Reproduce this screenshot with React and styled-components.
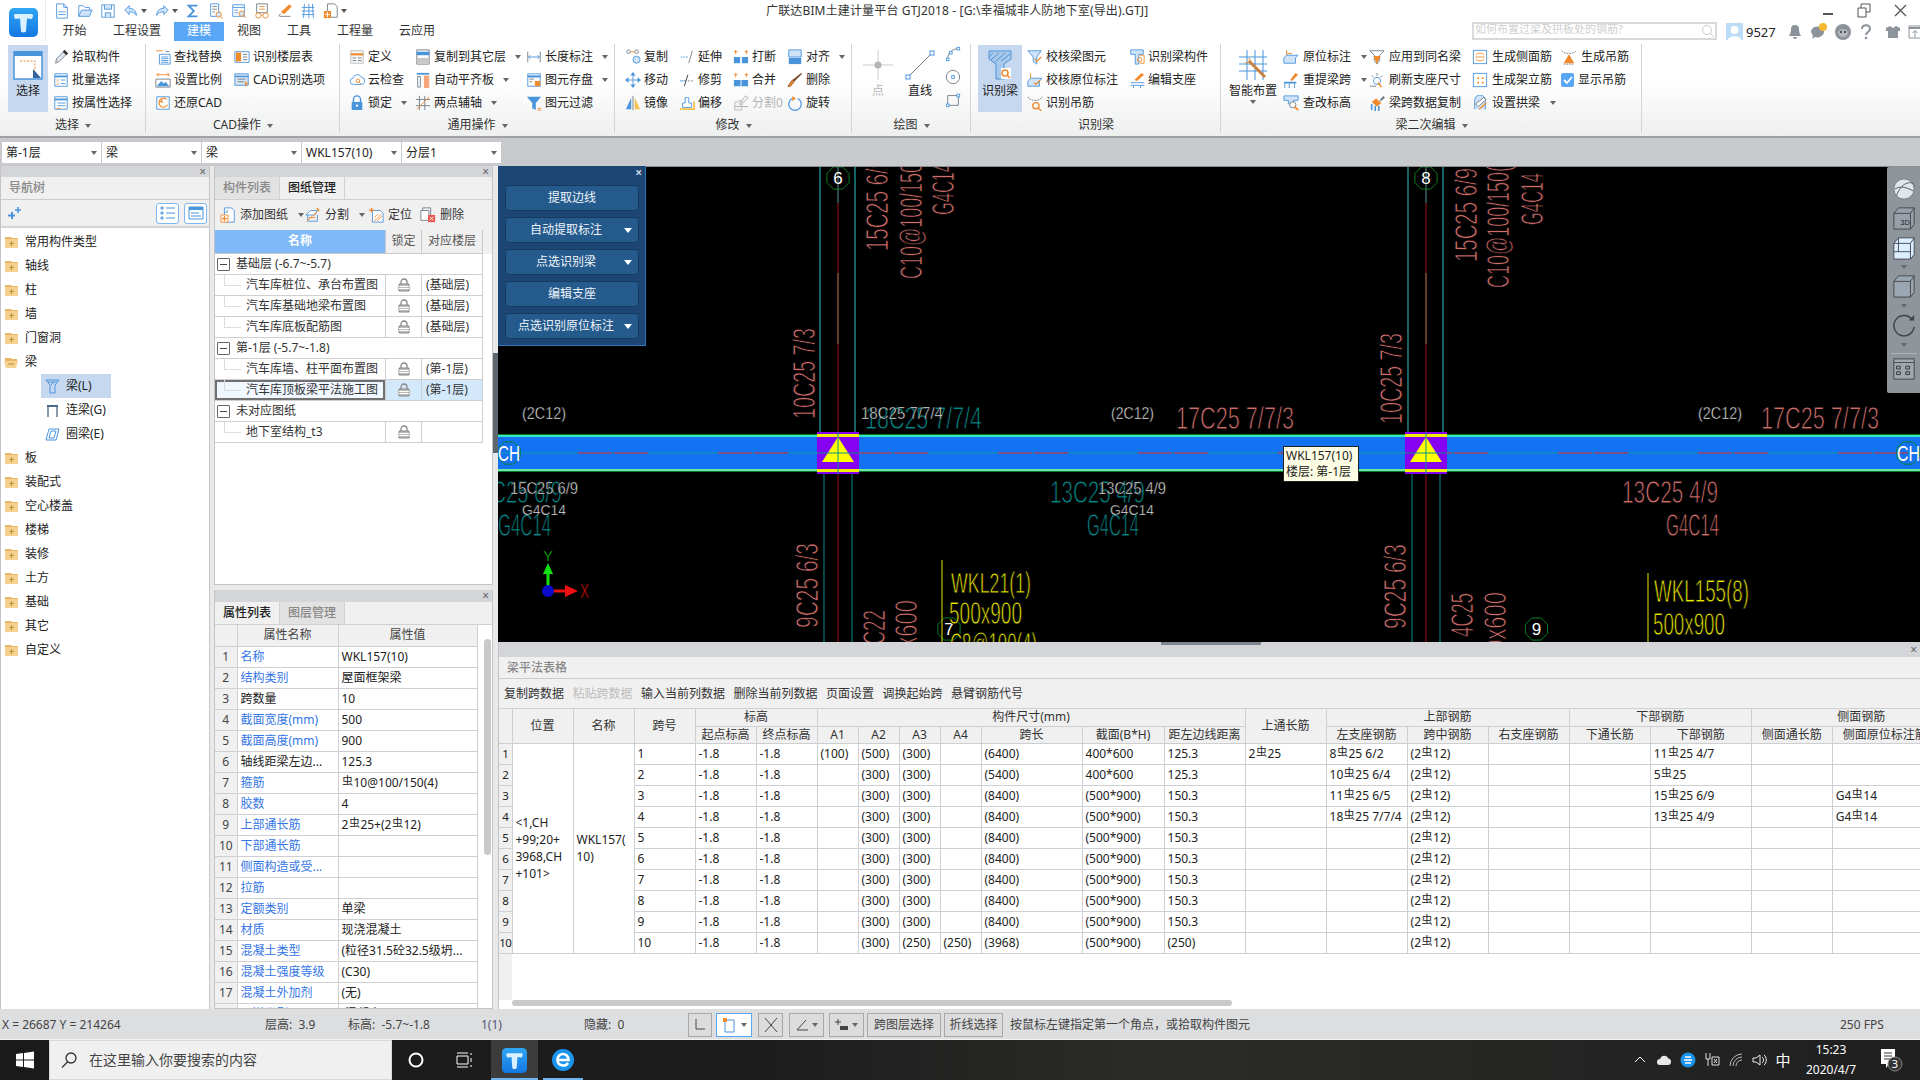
import React from 'react';
import styled, { createGlobalStyle } from 'styled-components';

const FONT = '"Noto Sans", "Noto Sans CJK SC", sans-serif';
const B = '#4a94dc', O = '#f08a2c', K = '#6f7b86', L = '#cfe4f8', Y = '#f6c14f';

const Global = createGlobalStyle`
  html, body { margin: 0; padding: 0; width: 1920px; height: 1080px; overflow: hidden; background: #eee; }
  body { font: 12px/16px ${FONT}; color: #222; }
  * { box-sizing: border-box; }
`;

const Frame = styled.div`display: flex; flex-direction: column; width: 1920px; height: 1080px; overflow: hidden;`;

/* ---------- icons ---------- */
const Svg = styled.svg`width: ${p => p.$s || 16}px; height: ${p => p.$s || 16}px; flex: none; display: block;`;
const icons = {
  file: <><path d="M3 1h8l4 4v12H3z" fill="#fff" stroke={B}/><path d="M11 1v4h4M5 10h8M5 13h8" stroke={B}/></>,
  folder: <><path d="M2 15V3h5l2 2h5v3" stroke={B}/><path d="M2 15l3-7h12l-3 7z" fill={L} stroke={B}/></>,
  save: <><path d="M2 2h14v14H2z" fill="#fff" stroke={B}/><path d="M5 2v5h8V2M6 16v-5h6v5" stroke={B} fill={L}/></>,
  undo: <><path d="M7 3L2 8l5 5V10c4 0 7 1 8 4 0-5-3-8-8-8z" fill={L} stroke={B}/></>,
  redo: <><path d="M11 3l5 5-5 5V10c-4 0-7 1-8 4 0-5 3-8 8-8z" fill={L} stroke={B}/></>,
  sigma: <><path d="M14 3H4l6 6-6 6h10" stroke={B} strokeWidth="2"/></>,
  report: <><path d="M3 1h9v14H3z" fill="#fff" stroke={B}/><path d="M5 4h5M5 7h5M5 10h3" stroke={K}/><circle cx="12" cy="13" r="3" fill={L} stroke={O}/><path d="M14 15l3 3" stroke={O}/></>,
  preview: <><path d="M2 2h13v13H2z" fill="#fff" stroke={B}/><path d="M2 5h13M4 8h4M4 11h4" stroke={B}/><circle cx="12" cy="12" r="3" fill={L} stroke={O}/><path d="M14 14l3 3" stroke={O}/></>,
  glass: <><path d="M3 1h12v10H3z" fill="#fff" stroke={K}/><path d="M6 4h6M6 7h6" stroke={O}/><circle cx="5" cy="14" r="3" stroke={O}/><circle cx="13" cy="14" r="3" stroke={O}/><path d="M8 14h2" stroke={O}/></>,
  pen: <><path d="M14 2l2 2-8 8-3-2z" fill={O} stroke={O}/><path d="M3 15h12M4 12l-2 3" stroke={K}/></>,
  gridq: <><path d="M2 5h14M2 9h14M2 13h14M5 1l-1 16M10 1v16M14 1l1 16" stroke={B}/></>,
  addfile: <><path d="M5 1h8l3 3v12H5z" fill="#fff" stroke={K}/><path d="M1 9h8v8H1z" fill={O}/><path d="M5 10v6M2 13h6" stroke="#fff"/></>,
  tadd: <><path d="M5 1h8l3 3v13H5z" fill="#fff" stroke={B}/><path d="M8 3v3H6" stroke={B}/><path d="M1 9h8v8H1z" fill="#fff" stroke={O}/><path d="M5 10v6M2 13h6" stroke={O} strokeWidth="1.500"/></>,
  tsplit: <><path d="M1 9l5-5h8l-3 5z" fill="#fff" stroke={B}/><path d="M3 9v7h11V9" stroke={B}/><path d="M4 12h8M2 16l14-13" stroke={O}/><path d="M13 1l3 3" stroke={O} strokeWidth="1.500"/></>,
  tloc: <><path d="M5 4h9l3 3v10H5z" fill="#fff" stroke={B}/><path d="M4 1v5M1 3.500h6" stroke={O} strokeWidth="1.500"/><path d="M7 16l8-8M10 16l6-6M7 12l4-4" stroke={O}/></>,
  tdel: <><path d="M3 1h9v11H3z" fill="#f4f4f4" stroke={K}/><path d="M1 4h9v11H1z" fill="#fff" stroke={K}/><path d="M9 9h8v8H9z" fill="#e8554e"/><path d="M11 11l4 4M15 11l-4 4" stroke="#fff"/></>,
  pick: <><path d="M13 2l3 3-9 9-4 2 1-5z" fill="#dfe6ee" stroke={K}/><path d="M12 2l4 4" stroke="#333" strokeWidth="3"/></>,
  batch: <><path d="M2 2h14v14H2z" fill="#fff" stroke={B}/><path d="M2 5h14" stroke={B} strokeWidth="2"/><path d="M4 9l1 1 2-2M4 13l1 1 2-2" stroke={O}/><path d="M9 9h5M9 13h5" stroke={B}/></>,
  attr: <><path d="M2 2h14v14H2z" fill="#fff" stroke={B}/><path d="M2 5h14" stroke={B} strokeWidth="2"/><path d="M5 9h9M5 12h9" stroke={B}/><path d="M4 15h4" stroke={O}/></>,
  find: <><path d="M5 6h12v11H5z" fill="#fff" stroke={B}/><path d="M7 9h8M7 11h8M7 13h8M7 15h8" stroke={B}/><path d="M1 2h8" stroke={O}/><path d="M12 3h4" stroke={K}/></>,
  scale: <><path d="M1 8v9h16V8z" fill="#fff" stroke={K}/><path d="M2 16l5-6 3 3 2-2 4 5z" fill={B}/><path d="M2 3h14M4 1L2 3l2 2M14 1l2 2-2 2" stroke={O}/></>,
  restore: <><path d="M2 2h14v14H2z" fill="#fff" stroke={B}/><path d="M13 5A5 5 0 1 0 14 11" stroke={O} strokeWidth="1.400"/><path d="M5 8l3-3 1 4z" fill={O}/></>,
  floor: <><path d="M1 3h16v12H1z" fill="#fff" stroke={B}/><path d="M2 4h6v10H2z" fill={O}/><path d="M10 6h5M10 9h5M10 12h5" stroke={K}/></>,
  cadopt: <><path d="M1 2h15v13H1z" fill="#d7e5f3" stroke={B}/><path d="M1 5h15" stroke={B} strokeWidth="1.600"/><path d="M4 8h9M4 11h7" stroke={K}/><path d="M12 10l5 4-3 0-1 3z" fill={O}/></>,
  define: <><path d="M2 2h14v14H2z" fill="#f6f6f6" stroke="#bbb"/><path d="M2 6h14" stroke={O} strokeWidth="2.400"/><path d="M4 10h4M4 13h4M10 10h4M10 13h4" stroke={K}/></>,
  cloud: <><path d="M5 14a3.500 3.500 0 0 1-.5-7 5 5 0 0 1 9.500-1 4 4 0 0 1-.5 8z" fill="#fff" stroke={B}/><circle cx="10" cy="10" r="2" stroke={O}/><path d="M11.500 11.500l2 2" stroke={O}/></>,
  lock: <><path d="M5 8V5a4 4 0 0 1 8 0v3" stroke={B} strokeWidth="1.600"/><rect x="3" y="8" width="12" height="9" rx="1" fill={B}/><circle cx="9" cy="12" r="1.300" fill="#fff"/></>,
  copyto: <><path d="M2 1h14v16H2z" fill="#fff" stroke={K}/><path d="M2 3h14v4H2z" fill={B}/><path d="M2 10h14v6H2z" fill="#c8c8c8"/></>,
  autoalign: <><path d="M2 1h14v2H2z" fill={B}/><path d="M3 5h3v12H3z" fill="#fff" stroke={K}/><path d="M10 4h6v14h-6z" fill="#f5a57b"/></>,
  twopoint: <><path d="M5 1v16M11 1v16M1 5h16M1 12h16" stroke={K}/><path d="M2 16L16 2" stroke={O}/></>,
  len: <><path d="M2 3v12M16 3v12" stroke={K}/><path d="M3 9h12M5 7L3 9l2 2M13 7l2 2-2 2" stroke={B}/></>,
  elemsave: <><path d="M2 2h14v14H2z" fill="#fff" stroke={B}/><path d="M2 5h14" stroke={B} strokeWidth="2.400"/><path d="M4 8h5M4 11h3" stroke={K}/><path d="M10 10h6v6h-6z" fill={O}/></>,
  filter: <><path d="M1 2h16l-6 7v8l-4-2V9z" fill={B}/><path d="M13 15h4M13 17h4" stroke={O}/></>,
  copy: <><circle cx="4" cy="3" r="2" stroke={K}/><circle cx="13" cy="12" r="4" fill={L} stroke={B}/><circle cx="13" cy="3" r="2" stroke={K}/><path d="M6 3h5" stroke={O}/></>,
  move: <><path d="M9 1v16M1 9h16" stroke={B}/><path d="M9 0l3 4H6zM9 18l3-4H6zM0 9l4-3v6zM18 9l-4-3v6z" fill={B}/></>,
  mirror: <><path d="M7 3v13H1z" fill={B}/><path d="M11 3v13h6z" fill={Y}/><path d="M9 1v16" stroke={K}/></>,
  extend: <><path d="M2 9h8" stroke={B} strokeDasharray="2 1"/><path d="M15 2l-4 14" stroke={K}/></>,
  trim: <><path d="M1 10h7" stroke={B}/><path d="M10 10h7" stroke={K} strokeDasharray="2 1.500"/><path d="M10 3l-4 13" stroke="#333"/></>,
  offset: <><path d="M4 14V9h3V3h4v6h3v5z" fill="#fff" stroke={B}/><path d="M1 16h16V7" stroke={Y} strokeWidth="2"/></>,
  brk: <><path d="M1 9h7v7H1zM10 9h7v7h-7z" fill={B}/><path d="M3 1v5M1 3h4M15 1v5M13 3h4" stroke={O}/></>,
  merge: <><path d="M1 9h16v7H1z" fill={B}/><path d="M9 9v7" stroke="#fff"/><path d="M3 1v5M1 3h4M15 1v5M13 3h4" stroke={O}/></>,
  split: <><path d="M2 8l8-2v11H2z" fill="#f2f2f2" stroke="#bbb"/><path d="M14 1l3 2-8 8-2-1z" stroke="#aaa"/><path d="M1 13h16" stroke="#aaa"/></>,
  align: <><path d="M2 1h14v8H2z" fill={L} stroke={B}/><path d="M2 10h14v7H2z" fill={B}/></>,
  del: <><path d="M16 1l1 1-9 9-2-2z" fill="#7a4a2a"/><path d="M6 9l2 2-4 5-3 0z" fill={O} stroke="#9a5a2a"/></>,
  rotate: <><path d="M6 4a7 7 0 1 0 6 0" stroke={B} strokeWidth="1.400"/><path d="M6 1l4 3-4 3z" fill={O}/></>,
  arc: <><path d="M3 15C3 8 8 3 15 3" stroke={K}/><rect x="1.500" y="13.500" width="3" height="3" fill="#fff" stroke={B}/><rect x="13.500" y="1.500" width="3" height="3" fill="#fff" stroke={B}/><rect x="5" y="6" width="3" height="3" fill="#fff" stroke={B}/></>,
  circ: <><circle cx="9" cy="9" r="7.500" stroke={K}/><rect x="7.500" y="7.500" width="3" height="3" fill="#fff" stroke={B}/></>,
  rect: <><path d="M3 4h12v11H3z" stroke={K}/><rect x="1.500" y="13.500" width="3" height="3" fill="#fff" stroke={B}/><rect x="13.500" y="2.500" width="3" height="3" fill="#fff" stroke={B}/></>,
  check: <><path d="M1 2h15l-5 7v8l-4-3V9z" fill={L} stroke={B}/><path d="M9 11l2 3 5-5" stroke={O} strokeWidth="1.300"/></>,
  checko: <><path d="M4 1v8h11" stroke={O}/><path d="M1 10l3-3h13l-3 3v6H1z" fill={L} stroke={B}/><path d="M8 12l2 2 5-5" stroke={O} strokeWidth="1.300"/></>,
  hang: <><path d="M1 2c2 3 3 4 8 4s6-1 8-4" stroke={K} strokeDasharray="2 1"/><circle cx="10" cy="12" r="3.500" stroke={O} strokeWidth="1.500"/><path d="M12.500 14.500L16 18" stroke={O} strokeWidth="1.500"/></>,
  beamc: <><path d="M2 1h14v5h-5v11H7V6H2z" fill={L} stroke={B}/><path d="M12 7h5v9h-5" fill="#fff" stroke={O}/><circle cx="12" cy="12" r="2.500" stroke={O}/></>,
  editsup: <><path d="M14 1l3 2-8 7-3-1z" fill={O}/><path d="M2 12h15M2 15h15M5 15v3M13 15v3" stroke={B}/></>,
  orig: <><path d="M4 1v8h7M4 5h6" stroke={O}/><path d="M1 10l3-3h13l-3 3v6H1z" fill={L} stroke={B}/></>,
  respan: <><path d="M14 1l3 2-7 7-2-1z" fill={O}/><path d="M1 11h14v2H1z" fill={B}/><path d="M2 13v5M7 13v5M13 13v5" stroke={B}/></>,
  changeh: <><path d="M1 1h16v5h-5v4H6V6H1z" fill={L} stroke={B}/><circle cx="11" cy="11" r="3.500" fill="#fff" stroke={K}/><path d="M13 13l4 4" stroke={O} strokeWidth="2"/></>,
  same: <><path d="M1 2h16l-5 5v6L9 17l-3-4V7z" fill="#fff" stroke={K}/><path d="M5 8h8l-4 9z" fill={O}/></>,
  refresh: <><path d="M9 1v3M3 4l2 2M15 4l-2 2" stroke={K}/><circle cx="9" cy="10" r="4" fill="#fff" stroke={B}/><path d="M10 12l4 5" stroke={O} strokeWidth="1.800"/><path d="M1 16h7" stroke={K}/></>,
  spanc: <><path d="M3 8l5-4 6 5-5 4z" fill={O}/><path d="M12 6l4-5 2 2-5 4z" fill={K}/><path d="M3 10v7M7 12v6M11 12v6" stroke={B} strokeWidth="1.800"/></>,
  side: <><rect x="1.500" y="1.500" width="15" height="15" fill="#fff" stroke={B}/><path d="M5 7c-2-3 10-3 8 0M5 11c-2 3 10 3 8 0" stroke={O}/><path d="M4 9h10" stroke={O}/></>,
  erect: <><rect x="1.500" y="1.500" width="15" height="15" fill="#fff" stroke={B}/><path d="M6 6h2v2H6zM11 6h2v2h-2zM6 11h2v2H6zM11 11h2v2h-2z" fill={O}/></>,
  arch: <><path d="M3 16V6a6 6 0 0 1 12 0v10" fill={L} stroke={B}/><path d="M4 10l9-7 3 2-9 8z" fill="#fff" stroke={K}/><path d="M8 16l8-7" stroke={O} strokeWidth="1.500"/></>,
  genhang: <><path d="M1 2c2 4 14 4 16 0M3 17h12" stroke={K} strokeDasharray="2 1"/><path d="M9 6l6 10H3z" fill={O}/></>,
};
const Icon = ({ n, s }) => <Svg $s={s} viewBox="0 0 18 18" fill="none" strokeWidth="1">{icons[n]}</Svg>;

/* ---------- title bar ---------- */
const Top = styled.header`display: flex; height: 41px; background: #fff; flex: none;`;
const LogoSlot = styled.div`width: 46px; flex: none; padding: 8px 0 0 9px; border-right: 1px solid #e8e8e8; height: 41px;`;
const TopRight = styled.div`flex: 1; display: flex; flex-direction: column; min-width: 0;`;
const Row1 = styled.div`display: grid; grid-template-columns: 720px auto 1fr; height: 22px; align-items: center;`;
const Quick = styled.div`display: flex; align-items: center; gap: 7px; padding-left: 8px;`;
const QuickCaret = styled.span`width: 0; height: 0; border: 3px solid transparent; border-top: 4px solid #555; margin: 2px 0 0 -5px;`;
const TitleText = styled.div`font-size: 12px; color: #333; letter-spacing: .15px; white-space: nowrap; padding-bottom: 1px;`;
const WinBtns = styled.div`display: flex; justify-content: flex-end; gap: 18px; padding-right: 10px; align-items: center;`;
const Row2 = styled.div`display: flex; height: 19px; align-items: stretch;`;
const Tabs = styled.nav`display: flex; flex: 1;`;
const Tab = styled.div`
  width: ${p => p.$w}px; margin-left: ${p => p.$m || 0}px; height: 19px; line-height: 18px; text-align: center; font-size: 12px;
  color: ${p => p.$on ? '#fff' : '#333'}; background: ${p => p.$on ? '#5aa6f6' : 'transparent'};
`;
const SearchBox = styled.div`
  width: 245px; height: 18px; border: 2px solid #d9d9d9; background: #fff; color: #cfcfcf; font-size: 11px; line-height: 10px;
  overflow: hidden; white-space: nowrap; padding-left: 1px; display: flex; justify-content: space-between;
`;
const TopTools = styled.div`display: flex; align-items: center; margin-left: 9px; width: 194px; height: 19px;`;
const UserName = styled.span`font-size: 13px; margin: 0 11px 0 3px; color: #222;`;
const ToolSlot = styled.span`display: flex; margin-right: ${p => p.$r ?? 7}px;`;

/* ---------- ribbon ---------- */
const Ribbon = styled.section`
  display: flex; flex: none; height: 97px; background: linear-gradient(#fff 40%, #eeefef); border-bottom: 2px solid #9fa1a3;
`;
const Group = styled.div`
  width: ${p => p.$w}px; flex: none; display: flex; flex-direction: column; position: relative;
  &::after { content: ''; position: absolute; right: 0; top: 3px; bottom: 3px; width: 1px; background: #d4d4d4; }
`;
const GroupBody = styled.div`display: flex; padding: 4px 0 0 ${p => p.$l}px; height: 74px;`;
const GroupLabel = styled.div`text-align: center; height: 20px; line-height: 20px; font-size: 12px; color: #333;`;
const Col = styled.div`width: ${p => p.$w ? `${p.$w}px` : 'auto'}; flex: none; display: flex; flex-direction: column;`;
const Item = styled.div`
  display: flex; align-items: center; height: 23px; white-space: nowrap; gap: ${p => p.$g ?? 3}px; font-size: 12px;
  color: ${p => p.$off ? '#b4b4b4' : '#222'};
`;
const Caret = styled.i`
  display: inline-block; width: 0; height: 0; margin-left: ${p => p.$m ?? 6}px; border: 3px solid transparent; border-top: 4px solid ${p => p.$c || '#666'}; border-bottom: 0; vertical-align: middle;
`;
const Big = styled.div`
  width: ${p => p.$w}px; margin-right: ${p => p.$r || 0}px; height: 67px; flex: none; display: flex; flex-direction: column; align-items: center; padding-top: 2px;
  background: ${p => p.$on ? '#c6d8ef' : 'transparent'}; color: ${p => p.$off ? '#b4b4b4' : '#222'}; font-size: 12px; line-height: 18px; white-space: nowrap;
`;
const BigArt = styled.div`height: 35px; display: flex; align-items: center; justify-content: center;`;
const CheckBox = styled.span`
  width: 13px; height: 14px; border-radius: 2px; background: #5aa6f6; color: #fff; display: flex; align-items: center; justify-content: center; flex: none;
`;
const MiniCol = styled.div`display: flex; flex-direction: column; gap: 7px; padding-top: 1px;`;

const items = (list, g) => list.map(([ic, t, c, off]) => (
  <Item key={t} $off={off} $g={g}><Icon n={ic} />{t}{c && <Caret />}</Item>
));

/* ---------- selector bar ---------- */
const SelBar = styled.div`flex: none; height: 28px; background: #c8cacd; display: flex; gap: 1px; padding: 4px 0 0 2px;`;
const Sel = styled.div`
  width: 99px; height: 21px; background: #fff; padding: 0 4px; line-height: 20px; font-size: 12px; display: flex; justify-content: space-between; align-items: center;
`;

/* ---------- main ---------- */
const Main = styled.main`flex: 1; display: flex; min-height: 0; background: #e9e9ea;`;
const Strip = styled.div`
  height: ${p => p.$h}px; background: #d3d5d9; flex: none; position: relative; display: flex; justify-content: flex-end; align-items: center; padding-right: 3px;
  font-size: 12px; color: #666; line-height: 10px;
`;
const Nav = styled.aside`width: 210px; flex: none; display: flex; flex-direction: column; background: #fff; border-left: 1px solid #c4c4c4; border-right: 1px solid #c4c4c4;`;
const NavTitle = styled.div`height: 23px; background: #f0f0f0; color: #888; font-weight: 500; padding-left: 8px; line-height: 22px; border-bottom: 1px solid #ccc; flex: none;`;
const NavTools = styled.div`height: 28px; background: #f0f0f0; border-bottom: 2px solid #d4d4d4; display: flex; align-items: center; padding: 0 2px 0 7px; gap: 5px; flex: none;`;
const NavBtn = styled.span`width: 23px; height: 21px; border: 1px solid #7db6f2; border-radius: 3px; background: #fff; display: flex; align-items: center; justify-content: center;`;
const Grow = styled.span`flex: 1;`;
const Tree = styled.div`flex: 1; padding-top: 2px;`;
const TreeRow = styled.div`
  display: flex; align-items: center; height: 24px; padding-left: 3px; gap: 6px; font-size: 12px;
`;
const TreeChild = styled.div`
  display: flex; align-items: center; height: 24px; margin-left: 40px; width: 70px; padding-left: 4px; gap: 6px; white-space: nowrap;
  background: ${p => p.$on ? '#c6d8ef' : 'transparent'};
`;

const Split = styled.div`width: ${p => p.$w}px; flex: none;`;
const Handle = styled.div`width: 5px; height: 100px; margin-top: 187px; background: #5e6770;`;

const Mid = styled.div`width: 279px; flex: none; display: flex; flex-direction: column; gap: 5px;`;
const Panel = styled.section`
  flex: ${p => p.$f}; height: ${p => p.$h}px; display: flex; flex-direction: column; background: #fff; border-left: 1px solid #c4c4c4; border-right: 1px solid #c4c4c4; border-bottom: 1px solid #c4c4c4; overflow: hidden; min-height: 0;
`;
const PanelTabs = styled.div`height: 23px; flex: none; display: flex; background: #f0f0f0; border-bottom: 1px solid #d0d0d0;`;
const PTab = styled.div`
  width: 65px; text-align: center; line-height: 22px; color: ${p => p.$on ? '#222' : '#888'}; font-weight: 500;
  background: ${p => p.$on ? '#f0f0f0' : '#e2e2e2'}; border-right: 1px solid #d0d0d0;
`;
const PTools = styled.div`height: 30px; flex: none; display: flex; align-items: center; background: #f0f0f0; padding-left: 5px;`;
const PTool = styled.div`display: flex; align-items: center; gap: 4px; width: ${p => p.$w}px; flex: none; color: #333; white-space: nowrap;`;
const DrawHead = styled.div`display: grid; grid-template-columns: 171px 36px 61px 1fr; height: 24px; flex: none; background: #f0f0f0;`;
const DH = styled.div`
  text-align: center; line-height: 22px; border-right: 1px solid #c9c9c9; border-bottom: 1px solid #c9c9c9; color: ${p => p.$on ? '#fff' : '#555'};
  background: ${p => p.$on ? '#7fb9f8' : 'transparent'}; font-weight: ${p => p.$on ? 600 : 400};
`;
const GroupRow = styled.div`
  height: 21px; width: 268px; display: flex; align-items: center; border-bottom: 1px solid #cfcfcf; border-right: 1px solid #cfcfcf; padding-left: 2px; gap: 6px; color: #333;
`;
const Minus = styled.span`
  width: 13px; height: 13px; border: 1px solid #666; border-radius: 1px; position: relative; background: #fff; flex: none;
  &::after { content: ''; position: absolute; left: 2px; right: 2px; top: 5px; height: 1px; background: #444; }
`;
const DrawRow = styled.div`display: grid; grid-template-columns: 171px 36px 61px; height: 21px; width: 268px;`;
const DC = styled.div`
  border-right: 1px solid #cfcfcf; border-bottom: 1px solid #cfcfcf; line-height: 20px; white-space: nowrap; overflow: hidden; color: #333; padding-left: ${p => p.$l || 0}px;
  display: flex; align-items: center; justify-content: ${p => p.$c ? 'center' : 'flex-start'};
  background: ${p => p.$sel ? '#d4e8fc' : '#fff'};
  ${p => p.$box ? 'box-shadow: inset 0 0 0 2px #707070; background:#f0f7ff;' : ''}
  ${p => p.$tree ? `position: relative; &::before { content:''; position:absolute; left:9px; top:0; height:10px; width:16px; border-left:1px solid #ddd; border-bottom:1px solid #ddd; }` : ''}
`;
const LockArt = () => <Svg $s={14} viewBox="0 0 14 14" fill="none"><path d="M4 6V4a3 3 0 0 1 6 0v2" stroke="#888" strokeWidth="1.300"/><path d="M2 6h10v7H2z" fill="#bbb" stroke="#888"/><path d="M2 8.500h10M2 10.500h10" stroke="#fff"/></Svg>;

const AttrStrip = styled(Strip)`height: 12px;`;
const AttrWrap = styled.div`flex: 1; display: flex; min-height: 0; overflow: hidden;`;
const AttrTable = styled.table`
  border-collapse: collapse; table-layout: fixed; width: 262px; height: 0;
  th, td { border: 1px solid #cfcfcf; border-top: 0; border-left: 0; height: 21px; padding: 0 0 0 3px; font-weight: 400; white-space: nowrap; overflow: hidden; line-height: 16px; text-align: left; }
  th { background: #f0f0f0; text-align: center; color: #444; padding: 0; }
`;
const IdxCell = styled.td`&& { background: #f0f0f0; text-align: center; padding: 0; color: #444; }`;
const NameCell = styled.td`&& { color: ${p => p.$blue ? '#3576e6' : '#222'}; }`;
const VScroll = styled.div`flex: 1; background: #fff; padding: 14px 4px 0 6px;`;
const VThumb = styled.div`height: 216px; width: 7px; background: #c9c9c9; border-radius: 4px;`;

/* ---------- canvas ---------- */
const Right = styled.div`flex: 1; min-width: 0; display: flex; flex-direction: column;`;
const Canvas = styled.div`height: 476px; flex: none; background: #000; position: relative; overflow: hidden;`;
const Drawing = styled.svg`display: block; width: 1422px; height: 476px;`;
const Float = styled.div`
  position: absolute; left: 0; top: 0; width: 148px; height: 180px; background: #1d4674; border-right: 1px solid #2c78b8; border-bottom: 1px solid #2c78b8;
  padding: 0 6px 0 7px; display: flex; flex-direction: column; gap: 6px;
`;
const FloatHead = styled.div`height: 13px; text-align: right; color: #c8d4e0; font-size: 12px; line-height: 13px; margin: 0 -3px 0 0; font-weight: 700;`;
const FloatBtn = styled.div`
  height: 26px; border: 1px solid #173a60; border-radius: 4px; background: #245a8c; color: #eef4fa; display: flex; align-items: center; justify-content: center; position: relative; font-size: 12px;
  padding-right: ${p => p.$c ? 12 : 0}px;
  ${p => p.$c ? `&::after { content:''; position:absolute; right:6px; top:10px; border:4px solid transparent; border-top:5px solid #fff; border-bottom:0; }` : ''}
`;
const Tip = styled.div`
  position: absolute; left: 785px; top: 280px; width: 76px; height: 36px; background: #fffee4; border: 1px solid #222; color: #222; font-size: 12px; line-height: 16px; padding: 1px 2px; white-space: nowrap;
`;
const ViewBar = styled.div`
  position: absolute; right: 0; top: 1px; width: 33px; height: 226px; background: #8e959b; border-radius: 2px 0 0 2px; display: flex; flex-direction: column; align-items: center; padding-top: 8px;
`;
const ViewSlot = styled.div`height: ${p => p.$h}px; flex: none; display: flex; align-items: center; justify-content: center; ${p => p.$line ? 'border-bottom:1px solid #aab0b5; width:26px;' : ''}`;

const Salmon = '#d06e6c', Teal = '#04898a', Yel = '#e8e800', Wh = '#eeeeee';
const T = ({ x, y, w, s, c, v, children }) => (
  <text x={x} y={y} fill={c} stroke="#000" strokeWidth={s * 0.04} fontFamily='"Liberation Sans", sans-serif' fontSize={s / 0.716} textLength={w} lengthAdjust="spacingAndGlyphs"
    transform={v ? `rotate(-90 ${x} ${y})` : undefined}>{children}</text>
);
const Gon = ({ cx, cy, r = 12, t }) => {
  const pts = Array.from({ length: 8 }, (_, i) => {
    const a = Math.PI / 8 + i * Math.PI / 4;
    return `${(cx + r * Math.cos(a)).toFixed(1)},${(cy + r * Math.sin(a)).toFixed(1)}`;
  }).join(' ');
  return <g><polygon points={pts} fill="none" stroke="#0a7f28" /><text x={cx} y={cy + 6} textAnchor="middle" fill="#fff" fontFamily='"Liberation Sans", sans-serif' fontSize="17">{t}</text></g>;
};
const Support = ({ x }) => (
  <g>
    <rect x={x - 21} y="432" width="42" height="42" fill="#8600f2" />
    <rect x={x - 21} y="434" width="42" height="3" fill="#f0f000" />
    <rect x={x - 21} y="469" width="42" height="3" fill="#f0f000" />
    <polygon points={`${x},437 ${x - 16},462 ${x + 16},462`} fill="#ffff00" />
    <line x1={x} x2={x} y1="432" y2="474" stroke="#0b8f8f" />
    <line x1={x - 21} x2={x + 21} y1="453" y2="453" stroke="#0b8f8f" />
  </g>
);
const dashes = [578, 718, 858, 998, 1138, 1278, 1418, 1558, 1698, 1838];

const CadDrawing = () => (
  <Drawing viewBox="498 166 1422 476">
    {[820, 855, 1408, 1443].map(x => <line key={x} x1={x} x2={x} y1="166" y2="434" stroke="#28c8c8" />)}
    {[824, 852, 1412, 1440].map(x => <line key={x} x1={x} x2={x} y1="472" y2="642" stroke="#049090" />)}
    {[838, 1426].map(x => (
      <g key={x}>
        <line x1={x} x2={x} y1="166" y2="642" stroke="#a00c0c" />
        <line x1={x} x2={x} y1="166" y2="203" stroke="#0a8a8a" />
        <line x1={x} x2={x} y1="273" y2="344" stroke="#775" />
      </g>
    ))}
    <Gon cx={838} cy={178} t="6" /><Gon cx={1426} cy={178} t="8" />
    <Gon cx={949} cy={629} t="7" /><Gon cx={1536.500} cy={629} t="9" />

    <T v x={888} y={251} w={94} s={22} c={Salmon}>15C25 6/9</T>
    <T v x={922} y={279} w={138} s={22} c={Salmon}>C10@100/150(4)</T>
    <T v x={954} y={215} w={52} s={22} c={Salmon}>G4C14</T>
    <T v x={1477} y={262} w={94} s={22} c={Salmon}>15C25 6/9</T>
    <T v x={1509} y={288} w={138} s={22} c={Salmon}>C10@100/150(2)</T>
    <T v x={1543} y={225} w={52} s={22} c={Salmon}>G4C14</T>
    <T v x={815} y={419} w={91} s={22} c={Salmon}>10C25 7/3</T>
    <T v x={1402} y={424} w={91} s={22} c={Salmon}>10C25 7/3</T>
    <T v x={818} y={628} w={85} s={22} c={Salmon}>9C25 6/3</T>
    <T v x={1406} y={629} w={85} s={22} c={Salmon}>9C25 6/3</T>
    <T v x={885} y={655} w={45} s={22} c={Salmon}>4C22</T>
    <T v x={917} y={660} w={60} s={22} c={Salmon}>0x600</T>
    <T v x={1473} y={637} w={44} s={22} c={Salmon}>4C25</T>
    <T v x={1506} y={652} w={60} s={22} c={Salmon}>0x600</T>

    <T x={865} y={429} w={117} s={22} c={Teal}>18C25 7/7/4</T>
    <T x={1176} y={429} w={118} s={22} c={Salmon}>17C25 7/7/3</T>
    <T x={1761} y={429} w={118} s={22} c={Salmon}>17C25 7/7/3</T>
    <T x={469} y={503} w={93} s={22} c={Teal}>15C25 6/9</T>
    <T x={498} y={536} w={53} s={22} c={Teal}>G4C14</T>
    <T x={1050} y={503} w={95} s={22} c={Teal}>13C25 4/9</T>
    <T x={1087} y={536} w={52} s={22} c={Teal}>G4C14</T>
    <T x={1622} y={503} w={96} s={22} c={Salmon}>13C25 4/9</T>
    <T x={1666} y={536} w={53} s={22} c={Salmon}>G4C14</T>

    <rect x="498" y="434" width="1422" height="38" fill="#1272f2" />
    <rect x="498" y="434" width="1422" height="1" fill="#0e7a2e" />
    <rect x="498" y="435" width="1422" height="2" fill="#36e4c4" />
    <rect x="498" y="469" width="1422" height="2" fill="#6ee6a4" />
    <rect x="498" y="471" width="1422" height="1" fill="#0e7a2e" />
    <line x1="498" x2="1920" y1="453" y2="453" stroke="#0f9aa8" />
    {dashes.map(x => (
      <g key={x} stroke="#e21a3a">
        <line x1={x} x2={x + 34} y1="453" y2="453" />
        <line x1={x + 36} x2={x + 70} y1="453" y2="453" />
      </g>
    ))}
    <Support x={838} /><Support x={1426} />
    <Gon cx={509} cy={453} t="" /><Gon cx={1908} cy={453} t="" />
    <text x={498} y={461} fill="#fff" fontFamily='"Liberation Sans", sans-serif' fontSize="22" textLength="22" lengthAdjust="spacingAndGlyphs">CH</text>
    <text x={1897} y={461} fill="#fff" fontFamily='"Liberation Sans", sans-serif' fontSize="22" textLength="23" lengthAdjust="spacingAndGlyphs">CH</text>

    <T x={522} y={419} w={44} s={12} c={Wh}>(2C12)</T>
    <T x={1111} y={419} w={43} s={12} c={Wh}>(2C12)</T>
    <T x={1698} y={419} w={44} s={12} c={Wh}>(2C12)</T>
    <T x={861} y={419} w={82} s={12} c={Wh}>18C25 7/7/4</T>
    <T x={510} y={494} w={68} s={12} c={Wh}>15C25 6/9</T>
    <T x={522} y={515} w={44} s={11} c={Wh}>G4C14</T>
    <T x={1098} y={494} w={68} s={12} c={Wh}>13C25 4/9</T>
    <T x={1110} y={515} w={44} s={11} c={Wh}>G4C14</T>

    <line x1="942" x2="942" y1="560" y2="642" stroke={Yel} />
    <T x={951} y={593} w={80} s={21} c={Yel}>WKL21(1)</T>
    <T x={949} y={624} w={73} s={22} c={Yel}>500x900</T>
    <T x={950} y={655} w={87} s={22} c={Yel}>C8@100(4)</T>
    <line x1="1648" x2="1648" y1="573" y2="642" stroke={Yel} />
    <T x={1654} y={602} w={95} s={22} c={Yel}>WKL155(8)</T>
    <T x={1653} y={635} w={72} s={22} c={Yel}>500x900</T>

    <line x1="548" x2="548" y1="570" y2="592" stroke="#12e012" strokeWidth="3" />
    <polygon points="548,563 543,574 553,574" fill="#12e012" />
    <line x1="548" x2="570" y1="591" y2="591" stroke="#f01212" strokeWidth="3" />
    <polygon points="578,591 565,585 565,597" fill="#f01212" />
    <circle cx="548" cy="591" r="6" fill="#0a0ac8" />
    <T x={543} y={561} w={10} s={11} c="#12e012">Y</T>
    <T x={580} y={598} w={9} s={14} c="#f01212">X</T>
    <rect x="498" y="166" width="1422" height="1" fill="#8a8d91" />
  </Drawing>
);

const viewIcons = {
  sphere: <Svg $s={24} viewBox="0 0 26 26" fill="none"><circle cx="13" cy="13" r="11" fill="#dfe6ec" stroke="#777"/><path d="M5 20C10 6 20 4 24 8M3 13c6-3 10-3 20 2" stroke="#555"/></Svg>,
  d3: <Svg $s={24} viewBox="0 0 26 26" fill="none"><path d="M2 8l5-6h17v18l-4 5H2z" fill="#98a1a9" stroke="#444"/><path d="M2 8h18v17M20 8l4-6" stroke="#444"/><text x="9" y="21" fontSize="8" fill="#222" fontFamily="Liberation Sans">3D</text></Svg>,
  light: <Svg $s={24} viewBox="0 0 26 26" fill="none"><path d="M2 8l5-6h17v18l-4 5H2z" fill="#dcefff" stroke="#445"/><path d="M2 8h18v17M20 8l4-6M7 2v15H2M7 17h13" stroke="#445"/></Svg>,
  solid: <Svg $s={24} viewBox="0 0 26 26" fill="none"><path d="M2 8l5-6h17v18l-4 5H2z" fill="#9aa6b2" stroke="#444"/><path d="M2 8h18v17M20 8l4-6" stroke="#444"/></Svg>,
  rot: <Svg $s={24} viewBox="0 0 26 26" fill="none"><path d="M21 5A11 11 0 1 0 24 14" stroke="#444" strokeWidth="1.600"/><path d="M24 1v6h-6" fill="#444"/></Svg>,
  tbl: <Svg $s={24} viewBox="0 0 26 26" fill="none"><path d="M2 2h22v22H2zM2 6h22" stroke="#444" fill="#a0a8b0"/><path d="M5 10h4v3H5zM15 10h4v3h-4zM5 16h4v3H5zM15 16h4v3h-4z" stroke="#333"/></Svg>,
};

/* ---------- beam table ---------- */
const TablePanel = styled.section`flex: 1; min-height: 0; display: flex; flex-direction: column; background: #fff; overflow: hidden; border-left: 1px solid #c4c4c4;`;
const GrabBar = styled.span`position: absolute; left: 662px; top: 0; width: 100px; height: 3px; background: #7d858e;`;
const TableTitle = styled.div`height: 22px; flex: none; background: #f0f0f0; border-bottom: 1px solid #ccc; color: #888; font-weight: 500; padding-left: 8px; line-height: 21px;`;
const TableTools = styled.div`height: 29px; flex: none; background: #f0f0f0; display: flex; gap: 8.500px; align-items: center; padding-left: 5px; color: #333;`;
const ToolText = styled.span`color: ${p => p.$off ? '#bcbcbc' : '#333'}; white-space: nowrap;`;
const TableClip = styled.div`flex: 1; min-height: 0; overflow: hidden; border-top: 1px solid #cfd0d2; background: linear-gradient(to right, #f0f0f0 13px, #fff 13px);`;
const BeamTable = styled.table`
  border-collapse: collapse; table-layout: fixed; width: 1472px;
  th, td { border-right: 1px solid #cdcfd1; border-bottom: 1px solid #cdcfd1; padding: 0 3px; line-height: 16px; white-space: nowrap; overflow: hidden; color: #222; }
  th { font-weight: 400; background: #f0f0f0; height: 17px; color: #333; text-align: center; }
  td { height: 21px; background: #fff; }
`;
const RowNo = styled.td`&& { background: #f0f0f0; padding: 0; text-align: center; font-size: 11.500px; letter-spacing: -.5px; }`;
const Wrap = styled.td`&& { white-space: normal; line-height: 17px; vertical-align: middle; padding: 0 2px 0 3px; }`;
const HLeft = styled.th`&& { text-align: left; padding-left: 10px; }`;
const R = styled.span`display: inline-block; font-size: 11px; line-height: 10px; transform: translateY(-2px); margin: 0 .5px;`;
const HBar = styled.div`height: 9px; flex: none; background: #fff; padding: 0 0 3px 13px;`;
const HThumb = styled.div`width: 720px; height: 6px; background: #c9c9c9; border-radius: 3px;`;

const rebar = s => s.split('#').flatMap((p, i) => i ? [<R key={i}>虫</R>, p] : [p]);
const beamRows = [
  ['(100)', '(500)', '(300)', '', '(6400)', '400*600', '125.3', '2#25', '8#25 6/2', '', '11#25 4/7', ''],
  ['', '(300)', '(300)', '', '(5400)', '400*600', '125.3', '', '10#25 6/4', '', '5#25', ''],
  ['', '(300)', '(300)', '', '(8400)', '(500*900)', '150.3', '', '11#25 6/5', '', '15#25 6/9', 'G4#14'],
  ['', '(300)', '(300)', '', '(8400)', '(500*900)', '150.3', '', '18#25 7/7/4', '', '13#25 4/9', 'G4#14'],
  ['', '(300)', '(300)', '', '(8400)', '(500*900)', '150.3', '', '', '', '', ''],
  ['', '(300)', '(300)', '', '(8400)', '(500*900)', '150.3', '', '', '', '', ''],
  ['', '(300)', '(300)', '', '(8400)', '(500*900)', '150.3', '', '', '', '', ''],
  ['', '(300)', '(300)', '', '(8400)', '(500*900)', '150.3', '', '', '', '', ''],
  ['', '(300)', '(300)', '', '(8400)', '(500*900)', '150.3', '', '', '', '', ''],
  ['', '(300)', '(250)', '(250)', '(3968)', '(500*900)', '(250)', '', '', '', '', ''],
];
const colW = [13, 61, 61, 61, 61, 61, 41, 41, 41, 41, 101, 82, 81, 81, 81, 81, 81, 81, 101, 81, 139];

/* ---------- status + taskbar ---------- */
const Status = styled.footer`height: 31px; flex: none; background: #dddee0; display: flex; align-items: center; color: #444; border-bottom: 1px solid #f4f4f4; padding-top: 2px;`;
const SCell = styled.div`width: ${p => p.$w}px; flex: none; padding-left: ${p => p.$l || 0}px; white-space: nowrap; color: ${p => p.$c || '#444'};`;
const SBtn = styled.div`
  height: 24px; width: ${p => p.$w}px; flex: none; margin-right: ${p => p.$r ?? 4}px; border: 1px solid ${p => p.$on ? '#5aa6f6' : '#a8a8a8'}; background: ${p => p.$on ? '#fff' : '#dcdcdc'};
  display: flex; align-items: center; justify-content: center; gap: 3px; white-space: nowrap;
`;
const Taskbar = styled.footer`
  height: 40px; flex: none; display: flex; align-items: center; color: #fff; background: linear-gradient(90deg, #1a1a1a 0%, #1d1d1d 40%, #2b2b29 60%, #1f1f1f 100%);
`;
const Start = styled.div`width: 49px; display: flex; justify-content: center;`;
const TSearch = styled.div`
  width: 343px; height: 40px; background: #f0f0f0; color: #444; font-size: 14px; display: flex; align-items: center; padding-left: 11px; gap: 12px; border: 1px solid #d8d8d8; white-space: nowrap;
`;
const TSlot = styled.div`
  width: ${p => p.$w}px; height: 40px; flex: none; display: flex; align-items: center; justify-content: center; font-size: ${p => p.$f || 12}px;
  background: ${p => p.$on ? '#3c3c3c' : 'transparent'}; margin-left: ${p => p.$m || 0}px;
  ${p => p.$u ? 'box-shadow: inset 0 -2px 0 #6eb4ee;' : ''}
`;
const Clock = styled.div`width: 58px; text-align: center; font-size: 12px; line-height: 20px; margin-left: 7px; white-space: nowrap;`;
const TaskGrow = styled.div`flex: 1;`;

const AppLogo = ({ s = 29 }) => (
  <Svg $s={s} viewBox="0 0 29 29">
    <defs><linearGradient id={`lg${s}`} x1="0" x2="0" y1="0" y2="1"><stop offset="0" stopColor="#2fa6f3"/><stop offset="1" stopColor="#1477e2"/></linearGradient></defs>
    <rect x="0" y="0" width="29" height="29" rx="5" fill={`url(#lg${s})`}/>
    <path d="M6 6h17q1 0 1 2l-1 3-5-.500-1 13q-3 2-5 0l-1-13-5 .500-1-3q0-2 1-2z" fill="#d8f0ff"/>
  </Svg>
);

const tree1 = ['常用构件类型', '轴线', '柱', '墙', '门窗洞'];
const tree2 = ['板', '装配式', '空心楼盖', '楼梯', '装修', '土方', '基础', '其它', '自定义'];
const Folder = ({ open }) => (
  <Svg $s={15} viewBox="0 0 15 15">
    {open
      ? <><path d="M1 3h6l1 1h5v3H1z" fill="#e6b664"/><path d="M0 6h13l1 0-2 7H2z" fill="#f5d28f"/><path d="M4 9h6" stroke="#b98a3a"/></>
      : <><path d="M1 2h6l1 1h6v2H1z" fill="#e6b664"/><path d="M1 4h13v9H1z" fill="#f5d28f"/><path d="M5 8.500h5M7.500 6v5" stroke="#c4933f" strokeWidth="1.200"/></>}
  </Svg>
);

const attrs = [
  ['名称', 'WKL157(10)', 1], ['结构类别', '屋面框架梁', 1], ['跨数量', '10', 0], ['截面宽度(mm)', '500', 1], ['截面高度(mm)', '900', 1],
  ['轴线距梁左边...', '125.3', 0], ['箍筋', '#10@100/150(4)', 1], ['胶数', '4', 1], ['上部通长筋', '2#25+(2#12)', 1], ['下部通长筋', '', 1],
  ['侧面构造或受...', '', 1], ['拉筋', '', 1], ['定额类别', '单梁', 1], ['材质', '现浇混凝土', 1], ['混凝土类型', '(粒径31.5砼32.5级坍...', 1],
  ['混凝土强度等级', '(C30)', 1], ['混凝土外加剂', '(无)', 1], ['泵送类型', '(混凝土泵)', 1],
];
const cols = [
  ['基础层 (-6.7~-5.7)', [['汽车库桩位、承台布置图', '(基础层)'], ['汽车库基础地梁布置图', '(基础层)'], ['汽车库底板配筋图', '(基础层)']]],
  ['第-1层 (-5.7~-1.8)', [['汽车库墙、柱平面布置图', '(第-1层)'], ['汽车库顶板梁平法施工图', '(第-1层)', true]]],
  ['未对应图纸', [['地下室结构_t3', '']]],
];

export default function App() {
  return (
    <Frame>
      <Global />
      <Top>
        <LogoSlot><AppLogo /></LogoSlot>
        <TopRight>
          <Row1>
            <Quick>
              {['file', 'folder', 'save', 'undo'].map(n => <Icon key={n} n={n} />)}<QuickCaret />
              <Icon n="redo" /><QuickCaret />
              {['sigma', 'report', 'preview', 'glass', 'pen', 'gridq', 'addfile'].map(n => <Icon key={n} n={n} />)}<QuickCaret />
            </Quick>
            <TitleText>广联达BIM土建计量平台 GTJ2018 - [G:\幸福城非人防地下室(导出).GTJ]</TitleText>
            <WinBtns>
              <Svg $s={18} viewBox="0 0 18 18" fill="none"><path d="M3 12h10" stroke="#555" strokeWidth="2"/></Svg>
              <Svg $s={18} viewBox="0 0 18 18" fill="none"><path d="M5 6V2h9v8h-4M2 6h8v9H2z" stroke="#555"/></Svg>
              <Svg $s={18} viewBox="0 0 18 18" fill="none"><path d="M3 3l11 11M14 3L3 14" stroke="#555" strokeWidth="1.300"/></Svg>
            </WinBtns>
          </Row1>
          <Row2>
            <Tabs>
              <Tab $w={25} $m={16}>开始</Tab>
              <Tab $w={48} $m={26}>工程设置</Tab>
              <Tab $w={50} $m={13} $on>建模</Tab>
              <Tab $w={24} $m={13}>视图</Tab>
              <Tab $w={24} $m={26}>工具</Tab>
              <Tab $w={36} $m={26}>工程量</Tab>
              <Tab $w={36} $m={26}>云应用</Tab>
            </Tabs>
            <SearchBox>如何布置过梁及拱板处的钢筋?
              <Svg $s={14} viewBox="0 0 14 14" fill="none"><circle cx="6" cy="6" r="4.500" stroke="#ccc"/><path d="M9 9l4 4" stroke="#ccc"/></Svg>
            </SearchBox>
            <TopTools>
              <Svg $s={17} viewBox="0 0 17 17"><rect width="17" height="17" fill="#bcdcf8"/><circle cx="8.500" cy="7" r="4" fill="#fff"/><path d="M2 17c0-5 13-5 13 0z" fill="#fff"/></Svg>
              <UserName>9527</UserName>
              <ToolSlot><Svg $s={16} viewBox="0 0 16 16"><path d="M8 1a4 4 0 0 1 4 4c0 5 2 6 2 7H2c0-1 2-2 2-7a4 4 0 0 1 4-4zM6 13h4a2 2 0 0 1-4 0z" fill="#8c939a"/></Svg></ToolSlot>
              <ToolSlot><Svg $s={17} viewBox="0 0 17 17"><path d="M1 9a6.500 5.500 0 1 1 4 5l-3 2 1-3z" fill="#8c939a"/><circle cx="13" cy="4" r="4" fill="#f5b82e"/></Svg></ToolSlot>
              <ToolSlot><Svg $s={18} viewBox="0 0 18 18"><circle cx="9" cy="9" r="8" fill="#8c939a"/><ellipse cx="9" cy="10" rx="5" ry="4" fill="#b4b8bc"/><circle cx="7" cy="9" r="1" fill="#333"/><circle cx="11" cy="9" r="1" fill="#333"/></Svg></ToolSlot>
              <ToolSlot $r={10}><Svg $s={16} viewBox="0 0 16 16" fill="none"><path d="M3 5c0-5 8-5 8 0 0 3-4 3-4 6" stroke="#8c939a" strokeWidth="2"/><circle cx="7" cy="14" r="1.300" fill="#8c939a"/></Svg></ToolSlot>
              <ToolSlot $r={6}><Svg $s={16} viewBox="0 0 16 16"><path d="M5 2L1 4v3l2 0v7h10V7l2 0V4l-4-2-3 2z" fill="#8c939a"/></Svg></ToolSlot>
              <ToolSlot><Svg $s={16} viewBox="0 0 16 16" fill="none"><path d="M2 2h12v12H2z" stroke="#8c939a"/><path d="M2 4h12" stroke="#8c939a" strokeWidth="2"/><path d="M8 13V7M5.500 9L8 6.500 10.500 9" stroke="#8c939a"/></Svg></ToolSlot>
            </TopTools>
          </Row2>
        </TopRight>
      </Top>

      <Ribbon>
        <Group $w={146}>
          <GroupBody $l={8}>
            <Big $w={40} $r={5} $on>
              <BigArt>
                <Svg $s={30} viewBox="0 0 30 30" fill="none"><path d="M1 2h28v27H1z" fill="#fff" stroke={B} strokeWidth="1.500"/><path d="M1 1h28v5H1z" fill={B}/><path d="M7 11h15v10" stroke={O} strokeDasharray="2 1.500"/><path d="M20 19l8 9h-8z" fill="#35629a"/></Svg>
              </BigArt>
              <span>选择</span>
            </Big>
            <Col>{items([['pick', '拾取构件'], ['batch', '批量选择'], ['attr', '按属性选择']])}</Col>
          </GroupBody>
          <GroupLabel>选择<Caret /></GroupLabel>
        </Group>
        <Group $w={194}>
          <GroupBody $l={9}>
            <Col $w={79}>{items([['find', '查找替换'], ['scale', '设置比例'], ['restore', '还原CAD']])}</Col>
            <Col>{items([['floor', '识别楼层表'], ['cadopt', 'CAD识别选项']])}</Col>
          </GroupBody>
          <GroupLabel>CAD操作<Caret /></GroupLabel>
        </Group>
        <Group $w={275}>
          <GroupBody $l={9}>
            <Col $w={66}>{items([['define', '定义'], ['cloud', '云检查'], ['lock', '锁定', 1]])}</Col>
            <Col $w={111}>{items([['copyto', '复制到其它层', 1], ['autoalign', '自动平齐板', 1], ['twopoint', '两点辅轴', 1]])}</Col>
            <Col>{items([['len', '长度标注', 1], ['elemsave', '图元存盘', 1], ['filter', '图元过滤']])}</Col>
          </GroupBody>
          <GroupLabel>通用操作<Caret /></GroupLabel>
        </Group>
        <Group $w={237}>
          <GroupBody $l={10}>
            <Col $w={54}>{items([['copy', '复制'], ['move', '移动'], ['mirror', '镜像']])}</Col>
            <Col $w={54}>{items([['extend', '延伸'], ['trim', '修剪'], ['offset', '偏移']])}</Col>
            <Col $w={54}>{items([['brk', '打断'], ['merge', '合并'], ['split', '分割', 0, 1]])}</Col>
            <Col>{items([['align', '对齐', 1], ['del', '删除'], ['rotate', '旋转']])}</Col>
          </GroupBody>
          <GroupLabel>修改<Caret /></GroupLabel>
        </Group>
        <Group $w={119}>
          <GroupBody $l={11}>
            <Big $w={30} $r={12} $off>
              <BigArt>
                <Svg $s={30} viewBox="0 0 30 30" fill="none"><path d="M15 0v30M0 15h30" stroke="#ccc"/><circle cx="15" cy="15" r="3.500" fill="#b4b4b4"/></Svg>
              </BigArt>
              <span>点</span>
            </Big>
            <Big $w={30} $r={10}>
              <BigArt>
                <Svg $s={30} viewBox="0 0 30 30" fill="none"><path d="M3 27L27 3" stroke={K}/><rect x="1" y="25" width="4" height="4" fill="#fff" stroke={B}/><rect x="25" y="1" width="4" height="4" fill="#fff" stroke={B}/></Svg>
              </BigArt>
              <span>直线</span>
            </Big>
            <MiniCol><Icon n="arc" /><Icon n="circ" /><Icon n="rect" /></MiniCol>
          </GroupBody>
          <GroupLabel>绘图<Caret /></GroupLabel>
        </Group>
        <Group $w={250}>
          <GroupBody $l={7}>
            <Big $w={44} $r={5} $on>
              <BigArt>
                <Svg $s={32} viewBox="0 0 32 32" fill="none"><path d="M5 2h22v8l-7 5v15h-8V15l-7-5z" fill="#a9c8ea" stroke={B}/><path d="M9 4L5 8M15 4l-8 7M21 4L11 13M26 5L17 12" stroke={B}/><path d="M17 19h10v11H17z" fill="#fff"/><circle cx="21" cy="24" r="3" stroke={O} strokeWidth="1.500"/><path d="M23 26l3 3" stroke={O} strokeWidth="1.500"/></Svg>
              </BigArt>
              <span>识别梁</span>
            </Big>
            <Col $w={102}>{items([['check', '校核梁图元'], ['checko', '校核原位标注'], ['hang', '识别吊筋']])}</Col>
            <Col>{items([['beamc', '识别梁构件'], ['editsup', '编辑支座']])}</Col>
          </GroupBody>
          <GroupLabel>识别梁</GroupLabel>
        </Group>
        <Group $w={421}>
          <GroupBody $l={7}>
            <Big $w={50} $r={5}>
              <BigArt>
                <Svg $s={32} viewBox="0 0 32 32" fill="none"><path d="M2 8h28M2 15h28M2 22h28M10 1v30M18 1v30M26 1v30" stroke={B}/><path d="M12 12l16 16" stroke="#c9823f" strokeWidth="3"/><path d="M12 9l2 4M8 14l4-1" stroke={O}/></Svg>
              </BigArt>
              <span>智能布置</span>
              <Caret $m={0} />
            </Big>
            <Col $w={86}>{items([['orig', '原位标注', 1], ['respan', '重提梁跨', 1], ['changeh', '查改标高']], 4)}</Col>
            <Col $w={103}>{items([['same', '应用到同名梁'], ['refresh', '刷新支座尺寸'], ['spanc', '梁跨数据复制']], 4)}</Col>
            <Col $w={89}>{items([['side', '生成侧面筋'], ['erect', '生成架立筋'], ['arch', '设置拱梁', 1]], 4)}</Col>
            <Col>
              <Item $g={4}><Icon n="genhang" />生成吊筋</Item>
              <Item $g={4}>
                <CheckBox><Svg $s={10} viewBox="0 0 10 10" fill="none"><path d="M1 5l3 3 5-6" stroke="#fff" strokeWidth="1.800"/></Svg></CheckBox>显示吊筋
              </Item>
            </Col>
          </GroupBody>
          <GroupLabel>梁二次编辑<Caret /></GroupLabel>
        </Group>
      </Ribbon>

      <SelBar>
        {['第-1层', '梁', '梁', 'WKL157(10)', '分层1'].map((t, i) => <Sel key={i}>{t}<Caret $m={0} /></Sel>)}
      </SelBar>

      <Main>
        <Nav>
          <Strip $h={11}>×</Strip>
          <NavTitle>导航树</NavTitle>
          <NavTools>
            <Svg $s={14} viewBox="0 0 14 14"><path d="M4 6v7M0 9.500h7" stroke={B} strokeWidth="2"/><path d="M10 1v6M7 4h6" stroke={B} strokeWidth="1.600"/></Svg>
            <Grow />
            <NavBtn><Svg $s={16} viewBox="0 0 16 16" fill="none"><path d="M6 3h9M6 8h9M6 13h9" stroke={B}/><path d="M1 2h2v2H1zM1 7h2v2H1zM1 12h2v2H1z" stroke={B}/></Svg></NavBtn>
            <NavBtn><Svg $s={16} viewBox="0 0 16 16" fill="none"><path d="M1 2h14v12H1z" stroke={B}/><path d="M1 2h14v3H1z" fill={B}/><path d="M3 8h8M3 11h10" stroke={B}/></Svg></NavBtn>
          </NavTools>
          <Tree>
            {tree1.map(t => <TreeRow key={t}><Folder />{t}</TreeRow>)}
            <TreeRow><Folder open />梁</TreeRow>
            <TreeChild $on>
              <Svg $s={15} viewBox="0 0 15 15" fill="none"><path d="M1 1h13l-4 5v8H5V6z" stroke={B}/><path d="M3 3h9M6 6l3-3" stroke={B}/></Svg>梁(L)
            </TreeChild>
            <TreeChild>
              <Svg $s={15} viewBox="0 0 15 15" fill="none"><path d="M2 3h11" stroke="#4a6a8a" strokeWidth="2"/><path d="M3 4v10M12 4v10" stroke="#8a9aaa" strokeWidth="2"/></Svg>连梁(G)
            </TreeChild>
            <TreeChild>
              <Svg $s={15} viewBox="0 0 15 15" fill="none"><path d="M4 2h10l-3 11H1z" stroke={B}/><path d="M6 4h5l-2 7H4z" stroke={B}/></Svg>圈梁(E)
            </TreeChild>
            {tree2.map(t => <TreeRow key={t}><Folder />{t}</TreeRow>)}
          </Tree>
        </Nav>

        <Split $w={4} />

        <Mid>
          <Panel $h={419} $f="none">
            <Strip $h={11}>×</Strip>
            <PanelTabs><PTab>构件列表</PTab><PTab $on>图纸管理</PTab></PanelTabs>
            <PTools>
              <PTool $w={85}><Icon n="tadd" />添加图纸<Caret /></PTool>
              <PTool $w={63}><Icon n="tsplit" />分割<Caret /></PTool>
              <PTool $w={52}><Icon n="tloc" />定位</PTool>
              <PTool $w={60}><Icon n="tdel" />删除</PTool>
            </PTools>
            <DrawHead><DH $on>名称</DH><DH>锁定</DH><DH>对应楼层</DH></DrawHead>
            {cols.map(([g, rows]) => (
              <React.Fragment key={g}>
                <GroupRow><Minus />{g}</GroupRow>
                {rows.map(([n, f, sel]) => (
                  <DrawRow key={n}>
                    <DC $l={31} $tree $box={sel}>{n}</DC>
                    <DC $c $sel={sel}><LockArt /></DC>
                    <DC $l={4} $sel={sel}>{f}</DC>
                  </DrawRow>
                ))}
              </React.Fragment>
            ))}
          </Panel>
          <Panel $f="1">
            <AttrStrip $h={12}>×</AttrStrip>
            <PanelTabs><PTab $on>属性列表</PTab><PTab>图层管理</PTab></PanelTabs>
            <AttrWrap>
              <AttrTable>
                <colgroup><col width="22" /><col width="101" /><col width="139" /></colgroup>
                <thead><tr><th /><th>属性名称</th><th>属性值</th></tr></thead>
                <tbody>
                  {attrs.map(([n, v, blue], i) => (
                    <tr key={n}><IdxCell>{i + 1}</IdxCell><NameCell $blue={blue}>{n}</NameCell><td>{rebar(v)}</td></tr>
                  ))}
                </tbody>
              </AttrTable>
              <VScroll><VThumb /></VScroll>
            </AttrWrap>
          </Panel>
        </Mid>

        <Split $w={5}><Handle /></Split>

        <Right>
          <Canvas>
            <CadDrawing />
            <Float>
              <FloatHead>×</FloatHead>
              <FloatBtn>提取边线</FloatBtn>
              <FloatBtn $c>自动提取标注</FloatBtn>
              <FloatBtn $c>点选识别梁</FloatBtn>
              <FloatBtn>编辑支座</FloatBtn>
              <FloatBtn $c>点选识别原位标注</FloatBtn>
            </Float>
            <Tip>WKL157(10)<br />楼层: 第-1层</Tip>
            <ViewBar>
              <ViewSlot $h={28}>{viewIcons.sphere}</ViewSlot>
              <ViewSlot $h={30}>{viewIcons.d3}</ViewSlot>
              <ViewSlot $h={30}>{viewIcons.light}</ViewSlot>
              <ViewSlot $h={8}><Caret $m={0} /></ViewSlot>
              <ViewSlot $h={30}>{viewIcons.solid}</ViewSlot>
              <ViewSlot $h={10}><Caret $m={0} /></ViewSlot>
              <ViewSlot $h={30}>{viewIcons.rot}</ViewSlot>
              <ViewSlot $h={8}><Caret $m={0} /></ViewSlot>
              <ViewSlot $h={5} $line />
              <ViewSlot $h={30}>{viewIcons.tbl}</ViewSlot>
            </ViewBar>
          </Canvas>
          <TablePanel>
            <Strip $h={15}><GrabBar />×</Strip>
            <TableTitle>梁平法表格</TableTitle>
            <TableTools>
              {['复制跨数据', '粘贴跨数据', '输入当前列数据', '删除当前列数据', '页面设置', '调换起始跨', '悬臂钢筋代号'].map((t, i) => <ToolText key={t} $off={i === 1}>{t}</ToolText>)}
            </TableTools>
            <TableClip>
              <BeamTable>
                <colgroup>{colW.map((w, i) => <col key={i} width={w} />)}</colgroup>
                <thead>
                  <tr>
                    <th rowSpan={2} /><th rowSpan={2}>位置</th><th rowSpan={2}>名称</th><th rowSpan={2}>跨号</th>
                    <th colSpan={2}>标高</th><th colSpan={7}>构件尺寸(mm)</th>
                    <th rowSpan={2}>上通长筋</th><th colSpan={3}>上部钢筋</th><th colSpan={2}>下部钢筋</th><th colSpan={2}>侧面钢筋</th>
                  </tr>
                  <tr>
                    <th>起点标高</th><th>终点标高</th><th>A1</th><th>A2</th><th>A3</th><th>A4</th><th>跨长</th><th>截面(B*H)</th><th>距左边线距离</th>
                    <th>左支座钢筋</th><th>跨中钢筋</th><th>右支座钢筋</th><th>下通长筋</th><th>下部钢筋</th><th>侧面通长筋</th><HLeft>侧面原位标注筋</HLeft>
                  </tr>
                </thead>
                <tbody>
                  {beamRows.map((r, i) => (
                    <tr key={i}>
                      <RowNo>{i + 1}</RowNo>
                      {i === 0 && <Wrap rowSpan={10}>&lt;1,CH<br />+99;20+<br />3968,CH<br />+101&gt;</Wrap>}
                      {i === 0 && <Wrap rowSpan={10}>WKL157(<br />10)</Wrap>}
                      <td>{i + 1}</td><td>-1.8</td><td>-1.8</td>
                      <td>{r[0]}</td><td>{r[1]}</td><td>{r[2]}</td><td>{r[3]}</td><td>{r[4]}</td><td>{r[5]}</td><td>{r[6]}</td>
                      <td>{rebar(r[7])}</td><td>{rebar(r[8])}</td><td>{rebar('(2#12)')}</td><td /><td /><td>{rebar(r[10])}</td><td /><td>{rebar(r[11])}</td>
                    </tr>
                  ))}
                </tbody>
              </BeamTable>
            </TableClip>
            <HBar><HThumb /></HBar>
          </TablePanel>
        </Right>
      </Main>

      <Status>
        <SCell $w={265} $l={2}>X = 26687 Y = 214264</SCell>
        <SCell $w={83}>层高:&nbsp;&nbsp;3.9</SCell>
        <SCell $w={133}>标高:&nbsp;&nbsp;-5.7~-1.8</SCell>
        <SCell $w={103} $c="#557">1(1)</SCell>
        <SCell $w={104}>隐藏:&nbsp;&nbsp;0</SCell>
        <SBtn $w={24}><Svg $s={14} viewBox="0 0 14 14" fill="none"><path d="M3 1v10h9" stroke="#444"/></Svg></SBtn>
        <SBtn $w={36} $on $r={6}><Svg $s={16} viewBox="0 0 16 16" fill="none"><path d="M3 3h9v12H3z" stroke={B}/><rect x="1" y="1" width="4" height="4" fill={O}/></Svg><Caret $m={0} /></SBtn>
        <SBtn $w={25} $r={6}><Svg $s={16} viewBox="0 0 16 16" fill="none"><path d="M2 1l12 14M14 1L2 15" stroke="#444"/></Svg></SBtn>
        <SBtn $w={35} $r={5}><Svg $s={14} viewBox="0 0 14 14" fill="none"><path d="M11 2L2 12h11" stroke="#444"/></Svg><Caret $m={0} /></SBtn>
        <SBtn $w={35} $r={3}><Svg $s={14} viewBox="0 0 14 14"><path d="M3 1v6M0 4h6" stroke="#444" fill="none"/><rect x="5" y="8" width="8" height="4" fill="#444"/></Svg><Caret $m={0} /></SBtn>
        <SBtn $w={74} $r={3}>跨图层选择</SBtn>
        <SBtn $w={59} $r={7}>折线选择</SBtn>
        <SCell $w={830}>按鼠标左键指定第一个角点，或拾取构件图元</SCell>
        <SCell $w={60}>250 FPS</SCell>
      </Status>

      <Taskbar>
        <Start><Svg $s={18} viewBox="0 0 18 18"><path d="M0 3l7-1v6.500H0zM8 2l10-1.500v8H8zM0 9.500h7V16l-7-1zM8 9.500h10v8L8 16z" fill="#fff"/></Svg></Start>
        <TSearch>
          <Svg $s={16} viewBox="0 0 16 16" fill="none"><circle cx="10" cy="6" r="5" stroke="#333" strokeWidth="1.300"/><path d="M6.500 10L1 15.500" stroke="#333" strokeWidth="1.300"/></Svg>
          在这里输入你要搜索的内容
        </TSearch>
        <TSlot $w={47}><Svg $s={16} viewBox="0 0 16 16" fill="none"><circle cx="8" cy="8" r="6.500" stroke="#fff" strokeWidth="2"/></Svg></TSlot>
        <TSlot $w={52}><Svg $s={18} viewBox="0 0 18 18" fill="none"><path d="M1 5h11v8H1zM1 2h11M1 16h11M15 2v2M15 7v4M15 14v2" stroke="#fff"/></Svg></TSlot>
        <TSlot $w={47} $on $u><AppLogo s={25} /></TSlot>
        <TSlot $w={40} $m={5} $u>
          <Svg $s={24} viewBox="0 0 24 24"><circle cx="12" cy="12" r="11" fill="#1b94ee"/><path d="M6.500 12h11c0-8-11-8-11 0 0 6 8 7 10.500 3" fill="none" stroke="#fff" strokeWidth="2.600"/></Svg>
        </TSlot>
        <TaskGrow />
        <TSlot $w={24}><Svg $s={12} viewBox="0 0 12 12" fill="none"><path d="M1 8l5-5 5 5" stroke="#fff"/></Svg></TSlot>
        <TSlot $w={24}><Svg $s={16} viewBox="0 0 16 16"><path d="M4 13a3 3 0 0 1 0-6 4.500 4.500 0 0 1 8.500-.5A3.300 3.300 0 0 1 12 13z" fill="#e8e8e8"/></Svg></TSlot>
        <TSlot $w={24}><Svg $s={16} viewBox="0 0 16 16"><circle cx="8" cy="8" r="7.500" fill="#1b94ee"/><path d="M4 8h8M5 5h6M5 11h6" stroke="#fff" strokeWidth="1.400"/></Svg></TSlot>
        <TSlot $w={24}><Svg $s={16} viewBox="0 0 16 16" fill="none"><path d="M2 1v6h4V1M4 7v7" stroke="#ddd"/><path d="M8 5h7v8H8z" stroke="#ddd"/><path d="M10 7l3 4M13 7l-3 4" stroke="#ddd"/></Svg></TSlot>
        <TSlot $w={24}><Svg $s={16} viewBox="0 0 16 16" fill="none"><path d="M2 14A12 12 0 0 1 14 2M5 14a9 9 0 0 1 9-9M8 14a6 6 0 0 1 6-6" stroke="#bbb"/></Svg></TSlot>
        <TSlot $w={23}><Svg $s={16} viewBox="0 0 16 16" fill="none"><path d="M1 6h3l4-3v10l-4-3H1zM10 5c2 1 2 5 0 6M12 3c3 2 3 8 0 10" stroke="#eee"/></Svg></TSlot>
        <TSlot $w={24} $f={15}>中</TSlot>
        <Clock>15:23<br />2020/4/7</Clock>
        <TSlot $w={60}>
          <Svg $s={26} viewBox="0 0 26 26"><path d="M4 2h14v15h-6l-3 4v-4H4z" fill="#fff"/><path d="M7 6h8M7 9h8M7 12h8" stroke="#333"/><circle cx="18" cy="17" r="7" fill="#333" stroke="#888"/><text x="18" y="21" fontSize="11" fill="#fff" textAnchor="middle" fontFamily="Noto Sans">3</text></Svg>
        </TSlot>
      </Taskbar>
    </Frame>
  );
}
